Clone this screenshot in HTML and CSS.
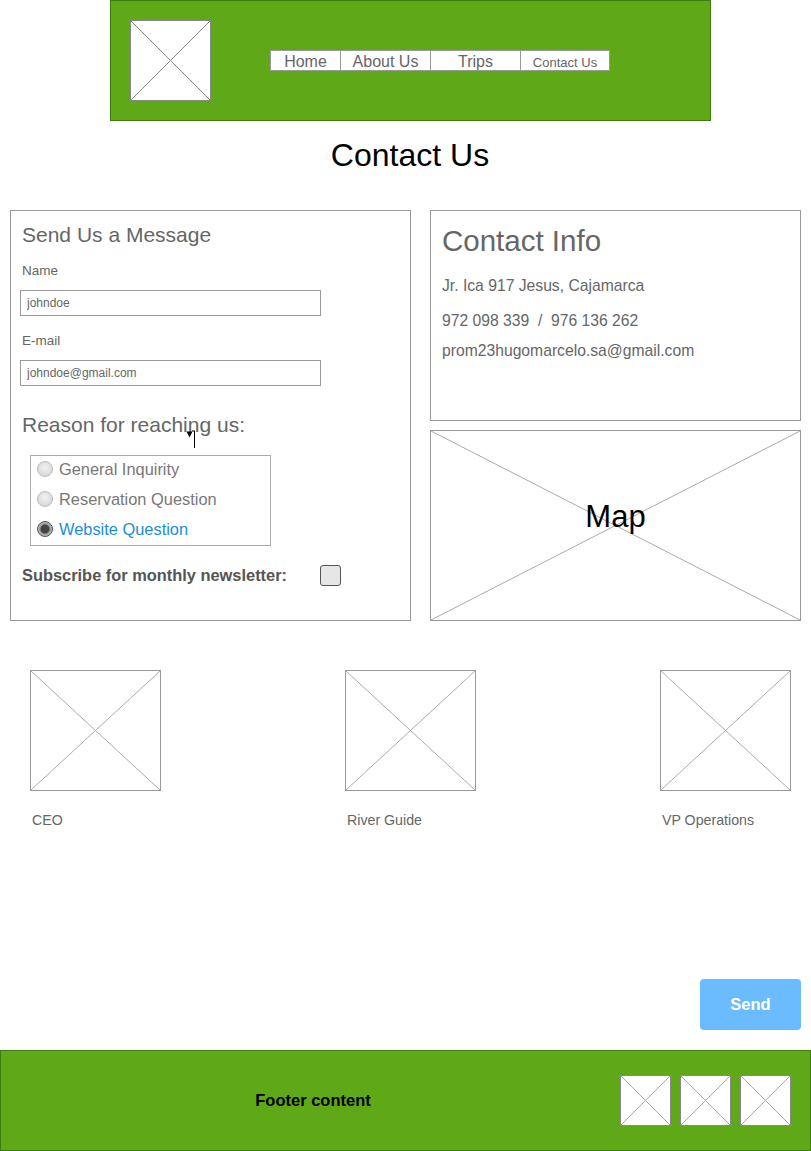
FILE: index.html
```html
<!DOCTYPE html>
<html lang="en">
<head>
    <meta charset="UTF-8">
    <meta name="viewport" content="width=device-width, initial-scale=1.0">
    <title>Contact Us</title>
    <link rel="stylesheet" href="styles.css">
</head>
<body>
    <div class="page">
        <header class="header">
            <div class="ph logo">
                <svg viewBox="0 0 100 100" preserveAspectRatio="none"><line x1="0" y1="0" x2="100" y2="100"/><line x1="100" y1="0" x2="0" y2="100"/></svg>
            </div>
            <nav class="nav">
                <a class="nav-item w70" href="#">Home</a>
                <a class="nav-item" href="#">About Us</a>
                <a class="nav-item" href="#">Trips</a>
                <a class="nav-item small" href="#">Contact Us</a>
            </nav>
        </header>

        <h1 class="page-title">Contact Us</h1>

        <div class="main-row">
            <form class="panel message-panel">
                <h2 class="panel-title">Send Us a Message</h2>
                <label class="field-label" for="name">Name</label>
                <input class="field" type="text" id="name" value="johndoe">
                <label class="field-label" for="email">E-mail</label>
                <input class="field" type="text" id="email" value="johndoe@gmail.com">

                <div class="reason">
                    <h3 class="reason-title">Reason for reaching us:</h3>
                    <svg class="cursor" width="12" height="22" viewBox="0 0 12 22"><path d="M0.5 3.5 L6.5 3.5 L3.5 9.5 Z" fill="#000"/><line x1="8.5" y1="3" x2="8.5" y2="20" stroke="#000" stroke-width="1"/><line x1="6" y1="3" x2="9" y2="3" stroke="#000" stroke-width="1"/></svg>
                </div>
                <div class="radio-box">
                    <div class="radio-row"><span class="radio"></span>General Inquirity</div>
                    <div class="radio-row"><span class="radio"></span>Reservation Question</div>
                    <div class="radio-row active"><span class="radio on"></span>Website Question</div>
                </div>
                <div class="subscribe">
                    <span>Subscribe for monthly newsletter:</span>
                    <span class="checkbox"></span>
                </div>
            </form>

            <div class="right-col">
                <div class="panel info-panel">
                    <h2 class="info-title">Contact Info</h2>
                    <p class="info-line first">Jr. Ica 917 Jesus, Cajamarca</p>
                    <p class="info-line">972 098 339 &nbsp;/ &nbsp;976 136 262</p>
                    <p class="info-line">prom23hugomarcelo.sa@gmail.com</p>
                </div>
                <div class="ph map">
                    <svg viewBox="0 0 100 100" preserveAspectRatio="none"><line x1="0" y1="0" x2="100" y2="100"/><line x1="100" y1="0" x2="0" y2="100"/></svg>
                    <span class="map-label">Map</span>
                </div>
            </div>
        </div>

        <div class="team">
            <div class="member">
                <div class="ph member-pic"><svg viewBox="0 0 100 100" preserveAspectRatio="none"><line x1="0" y1="0" x2="100" y2="100"/><line x1="100" y1="0" x2="0" y2="100"/></svg></div>
                <div class="member-role">CEO</div>
            </div>
            <div class="member">
                <div class="ph member-pic"><svg viewBox="0 0 100 100" preserveAspectRatio="none"><line x1="0" y1="0" x2="100" y2="100"/><line x1="100" y1="0" x2="0" y2="100"/></svg></div>
                <div class="member-role">River Guide</div>
            </div>
            <div class="member">
                <div class="ph member-pic"><svg viewBox="0 0 100 100" preserveAspectRatio="none"><line x1="0" y1="0" x2="100" y2="100"/><line x1="100" y1="0" x2="0" y2="100"/></svg></div>
                <div class="member-role">VP Operations</div>
            </div>
        </div>

        <div class="send-row">
            <button class="send-button" type="button">Send</button>
        </div>

        <footer class="footer">
            <div class="footer-text">Footer content</div>
            <div class="footer-icons">
                <div class="ph footer-icon"><svg viewBox="0 0 100 100" preserveAspectRatio="none"><line x1="0" y1="0" x2="100" y2="100"/><line x1="100" y1="0" x2="0" y2="100"/></svg></div>
                <div class="ph footer-icon"><svg viewBox="0 0 100 100" preserveAspectRatio="none"><line x1="0" y1="0" x2="100" y2="100"/><line x1="100" y1="0" x2="0" y2="100"/></svg></div>
                <div class="ph footer-icon"><svg viewBox="0 0 100 100" preserveAspectRatio="none"><line x1="0" y1="0" x2="100" y2="100"/><line x1="100" y1="0" x2="0" y2="100"/></svg></div>
            </div>
        </footer>
    </div>
</body>
</html>
```

FILE: styles.css
```css
body {
    margin: 0;
    background-color: #fff;
    font-family: 'Liberation Sans', Arial, sans-serif;
    color: #666;
}

.page {
    width: 811px;
    height: 1151px;
    display: flex;
    flex-direction: column;
}

/* placeholder box with a cross */
.ph {
    position: relative;
    background-color: #fff;
    border: 1px solid #999;
    box-sizing: border-box;
}
.ph svg {
    position: absolute;
    inset: 0;
    width: 100%;
    height: 100%;
}
.ph svg line {
    stroke: #aaa;
    stroke-width: 1;
    vector-effect: non-scaling-stroke;
}

.header {
    margin: 0 100px 0 110px;
    height: 121px;
    background-color: #5fa818;
    border: 1px solid #3e7c10;
    box-sizing: border-box;
    display: flex;
    align-items: flex-start;
    padding: 19px 0 0 19px;
}

.logo {
    width: 81px;
    height: 81px;
    border-color: #888;
}
.logo svg line {
    stroke: #888;
}

.nav {
    display: flex;
    margin: 30px 0 0 59px;
    background-color: #fff;
    border: 1px solid #999;
    height: 21px;
    box-sizing: border-box;
}

.nav-item {
    width: 90px;
    height: 19px;
    line-height: 21px;
    text-align: center;
    font-size: 16px;
    color: #666;
    text-decoration: none;
    border-left: 1px solid #999;
    box-sizing: border-box;
}
.nav-item.w70 {
    width: 69px;
    border-left: none;
}
.nav-item.small {
    width: 89px;
    font-size: 13px;
    line-height: 23px;
}

.page-title {
    margin: 18px 0 0;
    padding-left: 9px;
    height: 71px;
    text-align: center;
    font-size: 32px;
    font-weight: normal;
    color: #000;
    line-height: 33px;
}

.main-row {
    display: flex;
    gap: 19px;
    padding-left: 10px;
    height: 411px;
}

.panel {
    border: 1px solid #999;
    box-sizing: border-box;
}

.message-panel {
    width: 401px;
    height: 411px;
    margin: 0;
    padding: 12px 0 0 9px;
    display: flex;
    flex-direction: column;
    align-items: flex-start;
}

.panel-title {
    margin: 0 0 0 2px;
    font-size: 21px;
    font-weight: normal;
    line-height: 24px;
}

.field-label {
    font-size: 13.5px;
    margin: 15px 0 0 2px;
    line-height: 17px;
}

.field {
    width: 301px;
    height: 26px;
    margin: 11px 0 0 0;
    border: 1px solid #999;
    box-sizing: border-box;
    padding: 0 6px;
    font-family: 'Liberation Sans', Arial, sans-serif;
    font-size: 12px;
    color: #666;
}
.field + .field-label {
    margin-top: 16px;
}

.reason {
    position: relative;
    margin: 28px 0 0 2px;
}
.reason-title {
    margin: 0;
    font-size: 21px;
    font-weight: normal;
    line-height: 22px;
}
.cursor {
    position: absolute;
    left: 164px;
    top: 14px;
}

.radio-box {
    margin: 19px 0 0 10px;
    width: 241px;
    height: 91px;
    border: 1px solid #aaa;
    box-sizing: border-box;
}
.radio-row {
    display: flex;
    align-items: center;
    height: 30px;
    font-size: 16.4px;
    color: #777;
    padding-left: 6px;
    gap: 6px;
}
.radio-row:first-child {
    margin-top: -2px;
}
.radio-row.active {
    color: #1a8ed8;
}
.radio {
    width: 16px;
    height: 16px;
    border-radius: 50%;
    border: 1px solid #bbb;
    box-sizing: border-box;
    background: radial-gradient(circle at 50% 40%, #f2f2f2, #d0d0d0);
}
.radio.on {
    border-color: #555;
    background: radial-gradient(circle, #444 0, #444 4px, #999 5px, #bbb 7px);
}

.subscribe {
    display: flex;
    align-items: center;
    margin: 19px 0 0 2px;
    font-size: 16.4px;
    font-weight: bold;
    color: #555;
}
.checkbox {
    margin-left: 33px;
    width: 21px;
    height: 21px;
    border: 1px solid #555;
    border-radius: 3px;
    background-color: #e6e6e6;
    box-sizing: border-box;
}

.right-col {
    width: 371px;
    display: flex;
    flex-direction: column;
    gap: 9px;
}

.info-panel {
    height: 211px;
    padding: 13px 0 0 11px;
}
.info-title {
    margin: 0 0 20px;
    font-size: 29.5px;
    font-weight: normal;
    line-height: 33px;
}
.info-line {
    margin: 0 0 12px;
    font-size: 15.7px;
    line-height: 18px;
}
.info-line.first {
    margin-bottom: 17px;
}

.map {
    height: 191px;
    display: flex;
    align-items: center;
    justify-content: center;
}
.map-label {
    position: relative;
    font-size: 31px;
    color: #000;
    margin-top: -18px;
}

.team {
    display: flex;
    justify-content: space-between;
    padding: 49px 20px 0 30px;
}
.member-pic {
    width: 131px;
    height: 121px;
}
.member-role {
    margin: 21px 0 0 2px;
    font-size: 14.2px;
    line-height: 16px;
}

.send-row {
    flex: 1;
    display: flex;
    justify-content: flex-end;
    align-items: flex-end;
    padding: 0 10px 20px 0;
}
.send-button {
    width: 101px;
    height: 51px;
    border: none;
    border-radius: 4px;
    background-color: #6bbcff;
    color: #fff;
    font-family: 'Liberation Sans', Arial, sans-serif;
    font-size: 16.5px;
    font-weight: bold;
}

.footer {
    height: 101px;
    background-color: #5fa818;
    border: 1px solid #3e7c10;
    box-sizing: border-box;
    display: flex;
    align-items: center;
    padding-right: 19px;
}
.footer-text {
    flex: 1;
    text-align: center;
    padding-left: 20px;
    font-size: 16.5px;
    font-weight: bold;
    color: #000;
}
.footer-icons {
    display: flex;
    gap: 9px;
    margin-left: 15px;
}
.footer-icon {
    width: 51px;
    height: 51px;
    border-color: #888;
}
```
